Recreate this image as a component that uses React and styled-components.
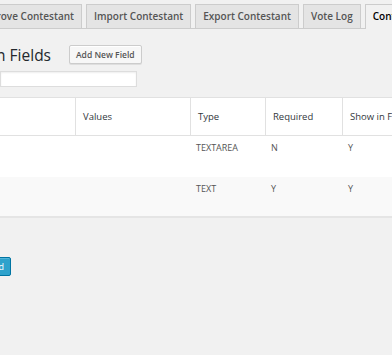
import React from 'react'
import styled, { createGlobalStyle } from 'styled-components';

const Global = createGlobalStyle`
    body {
        margin: 0;
        background: #f1f1f1;
        font-family: 'Open Sans', 'Noto Sans', sans-serif;
        overflow: hidden;
    }
`;

// koko sivu, vasen reuna leikattu kuten kuvakaappauksessa
const Page = styled.div`
    width: 392px;
    height: 355px;
    overflow: hidden;
    padding-top: 4px;
    box-sizing: border-box;
`;

const TabRow = styled.div`
    display: flex;
    gap: 4px;
    border-bottom: 1px solid #ccc;
    height: 24px;
`;

// laatikko joka loppuu annettuun kohtaan, sisalto valuu vasemmalle yli
const Lead = styled.div`
    flex: 0 0 ${p => p.$w}px;
    width: ${p => p.$w}px;
    display: flex;
    justify-content: flex-end;
    white-space: nowrap;
`;

const Tab = styled.div`
    flex-shrink: 0;
    box-sizing: border-box;
    height: ${p => (p.$active ? 25 : 24)}px;
    padding: 0 7px;
    border: 1px solid #ccc;
    border-bottom: none;
    background: ${p => (p.$active ? '#f1f1f1' : '#e4e4e4')};
    color: ${p => (p.$active ? '#000' : '#555')};
    font-size: 10px;
    font-weight: 600;
    line-height: 23px;
    white-space: nowrap;
`;

const TitleRow = styled.div`
    display: flex;
    align-items: center;
    gap: 18px;
    margin-top: 15px;
`;

const Title = styled.h2`
    margin: 0;
    font-size: 15.5px;
    font-weight: 400;
    color: #23282d;
    line-height: 20px;
    padding-top: 1px;
`;

const SmallButton = styled.button`
    height: 19px;
    padding: 0 6px;
    border: 1px solid #ccc;
    border-radius: 2px;
    background: #f7f7f7;
    color: #555;
    font-family: inherit;
    font-size: 8.5px;
    font-weight: 600;
    box-shadow: 0 1px 0 #fff inset, 0 1px 0 rgba(0,0,0,.08);
`;

const Search = styled.div`
    margin-top: 6px;
    width: 137px;
    height: 16px;
    box-sizing: border-box;
    background: #fff;
    border: 1px solid #ddd;
    box-shadow: inset 0 1px 2px rgba(0,0,0,.07);
`;

const Table = styled.div`
    margin-top: 10px;
    width: 460px;
    background: #fff;
    border-top: 1px solid #e1e1e1;
    border-bottom: 2px solid #e5e5e5;
`;

const Row = styled.div`
    display: grid;
    grid-template-columns: 75px 115px 75px 77px 1fr;
    height: ${p => p.$h}px;
    background: ${p => (p.$alt ? '#f9f9f9' : '#fff')};
    border-bottom: ${p => (p.$head ? '1px solid #e1e1e1' : 'none')};
    box-sizing: border-box;
`;

const HeadCell = styled.div`
    border-left: ${p => (p.$first ? 'none' : '1px solid #e1e1e1')};
    padding-left: 7px;
    display: flex;
    align-items: center;
    font-size: 9.5px;
    color: #32373c;
    white-space: nowrap;
`;

const Cell = styled.div`
    padding: 6px 0 0 ${p => (p.$first ? 0 : 6)}px;
    font-size: 9px;
    color: #555;
    line-height: 11px;
    white-space: nowrap;
`;

const SubmitRow = styled.div`
    display: flex;
    margin-top: 39px;
`;

const PrimaryButton = styled.button`
    height: 19px;
    padding: 0 6px;
    border: 1px solid #0074a2;
    border-radius: 2px;
    background: #2ea2cc;
    color: #fff;
    font-family: inherit;
    font-size: 9px;
    white-space: nowrap;
    box-shadow: inset 0 1px 0 rgba(120,200,230,.5);
`;

const kentat = [
    { nimi: 'Description', arvot: '', tyyppi: 'TEXTAREA', pakollinen: 'N', nayta: 'Y', h: 41 },
    { nimi: 'Name', arvot: '', tyyppi: 'TEXT', pakollinen: 'Y', nayta: 'Y', h: 39, alt: true },
];

const App = () => {
    return (
        <Page>
            <Global />
            <TabRow>
                <Lead $w={82}><Tab>Approve Contestant</Tab></Lead>
                <Tab>Import Contestant</Tab>
                <Tab>Export Contestant</Tab>
                <Tab>Vote Log</Tab>
                <Tab $active>Contestant Fields</Tab>
            </TabRow>
            <TitleRow>
                <Lead $w={51}><Title>Registration Fields</Title></Lead>
                <SmallButton>Add New Field</SmallButton>
            </TitleRow>
            <Search />
            <Table>
                <Row $head $h={38}>
                    <HeadCell $first />
                    <HeadCell>Values</HeadCell>
                    <HeadCell>Type</HeadCell>
                    <HeadCell>Required</HeadCell>
                    <HeadCell>Show in Form</HeadCell>
                </Row>
                {kentat.map(k => (
                    <Row key={k.tyyppi} $h={k.h} $alt={k.alt}>
                        <Cell $first />
                        <Cell>{k.arvot}</Cell>
                        <Cell>{k.tyyppi}</Cell>
                        <Cell>{k.pakollinen}</Cell>
                        <Cell>{k.nayta}</Cell>
                    </Row>
                ))}
            </Table>
            <SubmitRow>
                <Lead $w={11}><PrimaryButton>Add Field</PrimaryButton></Lead>
            </SubmitRow>
        </Page>
    )
};

export default App;
